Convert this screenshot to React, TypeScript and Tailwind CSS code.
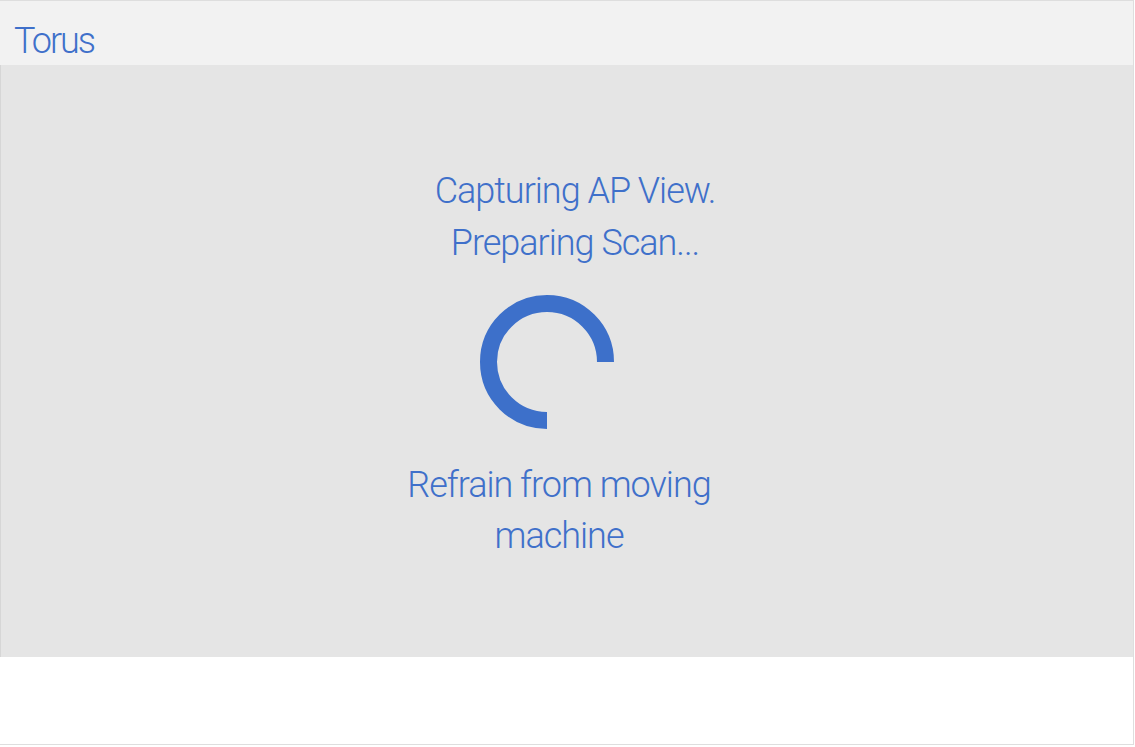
export default function App() {
  return (
    <div
      className="w-[1135px] h-[747px] bg-white"
      style={{ fontFamily: "Roboto, 'Liberation Sans', sans-serif" }}
    >
      <div className="w-[1134px] h-[745px] border-t border-r border-b border-[#dedede] flex flex-col">
        {/* Header */}
        <header className="h-[64px] bg-[#f2f2f2] flex items-start pt-[22px] pl-[14px]">
          <span className="text-[36px] font-light leading-none tracking-[-2px] text-[#3f70ca]">
            Torus
          </span>
        </header>

        {/* Main panel */}
        <main className="h-[592px] bg-[#e5e5e5] border-l border-[#d6d6d6] flex flex-col items-center pt-[100px] text-[#3f70ca] font-light">
          <div className="pl-[16px] text-center text-[36px] leading-[52px] tracking-[-1px]">
            <div>Capturing AP View.</div>
            <div>Preparing Scan...</div>
          </div>

          <div className="mt-[26px] pr-[41px]">
            <svg width="134" height="134" viewBox="0 0 134 134">
              <path
                d="M125.5 67 A58.5 58.5 0 1 0 67 125.5"
                fill="none"
                stroke="#3d70ca"
                strokeWidth="17"
              />
            </svg>
          </div>

          <div className="mt-[31px] pr-[16px] text-center text-[36px] leading-[51px] tracking-[-1px]">
            <div>Refrain from moving</div>
            <div>machine</div>
          </div>
        </main>

        <div className="flex-1 bg-white" />
      </div>
    </div>
  );
}
